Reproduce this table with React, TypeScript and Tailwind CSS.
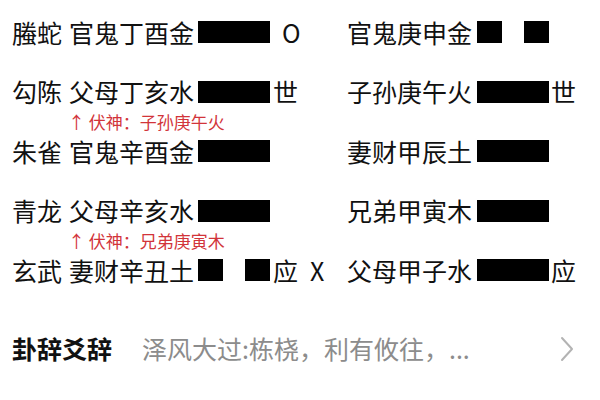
const font = { fontFamily: '"Noto Sans CJK SC", "Noto Sans", sans-serif' };

type Line = "yang" | "yin";

interface Yao {
  god: string;
  left: string;
  leftLine: Line;
  leftMark?: string;
  leftMove?: string;
  fushen?: string;
  right: string;
  rightLine: Line;
  rightMark?: string;
}

const rows: Yao[] = [
  { god: "螣蛇", left: "官鬼丁酉金", leftLine: "yang", leftMove: "O", right: "官鬼庚申金", rightLine: "yin" },
  { god: "勾陈", left: "父母丁亥水", leftLine: "yang", leftMark: "世", fushen: "子孙庚午火", right: "子孙庚午火", rightLine: "yang", rightMark: "世" },
  { god: "朱雀", left: "官鬼辛酉金", leftLine: "yang", right: "妻财甲辰土", rightLine: "yang" },
  { god: "青龙", left: "父母辛亥水", leftLine: "yang", fushen: "兄弟庚寅木", right: "兄弟甲寅木", rightLine: "yang" },
  { god: "玄武", left: "妻财辛丑土", leftLine: "yin", leftMark: "应", leftMove: "X", right: "父母甲子水", rightLine: "yang", rightMark: "应" },
];

function YaoLine({ type }: { type: Line }) {
  if (type === "yang") return <div className="w-[72px] h-[22px] bg-black" />;
  return (
    <div className="w-[72px] h-[22px] flex justify-between">
      <div className="w-[25px] h-full bg-black" />
      <div className="w-[25px] h-full bg-black" />
    </div>
  );
}

export default function App() {
  return (
    <div className="w-[600px] h-[400px] bg-white text-[#111] overflow-hidden" style={font}>
      <div className="pt-[14px] pl-3">
        {rows.map((r) => (
          <div key={r.god}>
            <div className="grid grid-cols-[335px_1fr] h-[36px] items-center text-[25px] leading-none">
              <div className="flex items-center">
                <span>{r.god}</span>
                <span className="ml-[7px]">{r.left}</span>
                <div className="ml-[4px]">
                  <YaoLine type={r.leftLine} />
                </div>
                {r.leftMark && <span className="ml-[3px]">{r.leftMark}</span>}
                {r.leftMove && <span className="ml-[12px]">{r.leftMove}</span>}
              </div>
              <div className="flex items-center">
                <span>{r.right}</span>
                <div className="ml-[5px]">
                  <YaoLine type={r.rightLine} />
                </div>
                {r.rightMark && <span className="ml-[2px]">{r.rightMark}</span>}
              </div>
            </div>
            <div className="h-[23.5px] flex items-center pl-[56px] text-[17px] leading-none text-[#d2343a]">
              {r.fushen && (
                <span>
                  ↑ 伏神：{r.fushen}
                </span>
              )}
            </div>
          </div>
        ))}
      </div>

      <div className="mt-[19px] pl-3 pr-[26px] flex items-center h-[36px] text-[25px] leading-none">
        <span className="font-bold">卦辞爻辞</span>
        <span className="ml-[30px] text-[#8c8c8c]">泽风大过:栋桡，利有攸往，...</span>
        <svg className="ml-auto" width="14" height="26" viewBox="0 0 14 26" fill="none">
          <path d="M2 2 L12 13 L2 24" stroke="#b3b3b3" strokeWidth="2" strokeLinecap="round" strokeLinejoin="round" />
        </svg>
      </div>
    </div>
  );
}
